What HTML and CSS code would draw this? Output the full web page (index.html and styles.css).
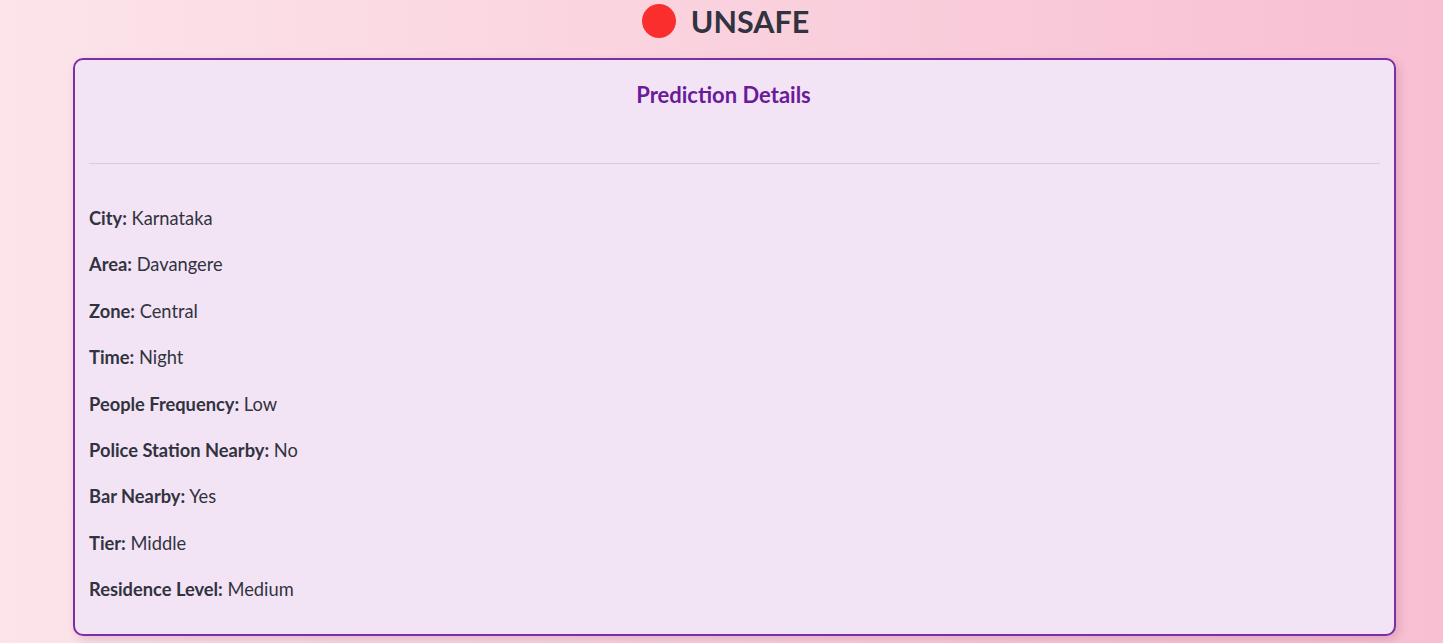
FILE: index.html
```html
<!DOCTYPE html>
<html>
<head>
<meta charset="utf-8">
<link rel="stylesheet" href="styles.css">
</head>
<body>
<div class="page">
  <h1 class="verdict"><span class="dot"></span><span>UNSAFE</span></h1>
  <div class="card">
    <h3 class="card-title">Prediction Details</h3>
    <hr class="divider">
    <div class="details">
      <p class="row"><b>City:</b> Karnataka</p>
      <p class="row"><b>Area:</b> Davangere</p>
      <p class="row"><b>Zone:</b> Central</p>
      <p class="row"><b>Time:</b> Night</p>
      <p class="row"><b>People Frequency:</b> Low</p>
      <p class="row"><b>Police Station Nearby:</b> No</p>
      <p class="row"><b>Bar Nearby:</b> Yes</p>
      <p class="row"><b>Tier:</b> Middle</p>
      <p class="row"><b>Residence Level:</b> Medium</p>
    </div>
  </div>
</div>
</body>
</html>
```
FILE: styles.css
```css
html, body {
  margin: 0;
  padding: 0;
  height: 100%;
}
body {
  background: linear-gradient(90deg, #fce4ea 0%, #f8bfd2 100%);
  font-family: Lato, "Source Sans Pro", "Noto Sans", sans-serif;
  color: #31333f;
  overflow: hidden;
}
.page {
  padding: 0 47px 0 73px;
}
.verdict {
  margin: 0;
  height: 58px;
  display: flex;
  align-items: center;
  justify-content: center;
  gap: 15px;
  font-size: 30.5px;
  font-weight: 700;
  color: #31333f;
  padding-bottom: 16px;
  padding-right: 18px;
  box-sizing: border-box;
}
.dot {
  width: 34px;
  height: 34px;
  border-radius: 50%;
  background: #fb2e2e;
  display: inline-block;
}
.card {
  background: #f3e4f5;
  border: 2px solid #7b2fa6;
  border-radius: 10px;
  box-shadow: 3px 4px 10px rgba(120, 40, 80, 0.18);
  padding: 0 14px;
  height: 578px;
  box-sizing: border-box;
}
.card-title {
  margin: 0;
  padding-top: 22px;
  padding-right: 22px;
  text-align: center;
  font-size: 22px;
  font-weight: 700;
  color: #6a1b9a;
  line-height: 26px;
}
.divider {
  border: none;
  border-top: 1px solid #d9cbdd;
  margin: 55px 0 0 0;
}
.details {
  padding-top: 42px;
}
.row {
  margin: 0;
  font-size: 18.3px;
  line-height: 24px;
  height: 46.4px;
}
.row b {
  font-weight: 700;
}
```
